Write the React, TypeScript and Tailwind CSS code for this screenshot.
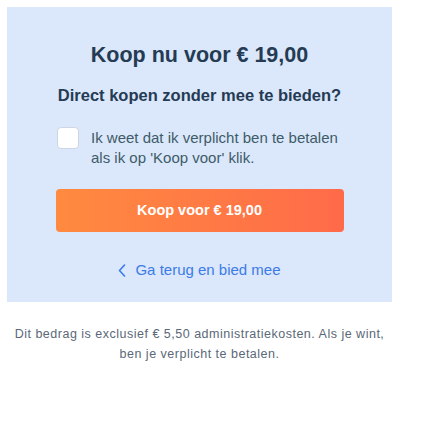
export default function App() {
  return (
    <div className="w-[439px] h-[443px] bg-white pt-[7px] pl-[7px] font-['Liberation_Sans',Arial,sans-serif]">
      <div className="w-[385px] bg-[#dbe7fb] pt-[35px] pb-[22px] px-[49px] flex flex-col items-center">
        <h2 className="text-[21.5px] leading-[26px] font-bold text-[#243b53]">
          Koop nu voor € 19,00
        </h2>
        <p className="mt-[17px] text-[16.5px] leading-[20px] font-bold text-[#243b53]">
          Direct kopen zonder mee te bieden?
        </p>
        <label className="mt-[23px] self-stretch flex items-start gap-[12px] pl-[1px]">
          <span className="-mt-[1px] w-[22px] h-[22px] shrink-0 rounded-[4px] bg-white border border-[#cdd6e2]" />
          <span className="text-[15px] leading-[20px] text-[#3e5c68]">
            Ik weet dat ik verplicht ben te betalen
            <br />
            als ik op 'Koop voor' klik.
          </span>
        </label>
        <button className="mt-[21px] w-[288px] h-[43px] rounded-[4px] bg-gradient-to-r from-[#ff8a3f] to-[#ff6a49] text-white font-bold text-[14.5px]">
          Koop voor € 19,00
        </button>
        <a className="mt-[28px] flex items-center gap-[9px] text-[15px] leading-[20px] text-[#3b7be6]">
          <svg width="8" height="13" viewBox="0 0 8 13" fill="none">
            <path d="M6.5 1 L1.5 6.5 L6.5 12" stroke="#3b7be6" strokeWidth="1.6" strokeLinecap="round" strokeLinejoin="round" />
          </svg>
          Ga terug en bied mee
        </a>
      </div>
      <p className="w-[385px] mt-[22px] text-center text-[12.5px] leading-[20px] tracking-[0.5px] text-[#5a6878]">
        Dit bedrag is exclusief € 5,50 administratiekosten. Als je wint,
        <br />
        ben je verplicht te betalen.
      </p>
    </div>
  );
}
